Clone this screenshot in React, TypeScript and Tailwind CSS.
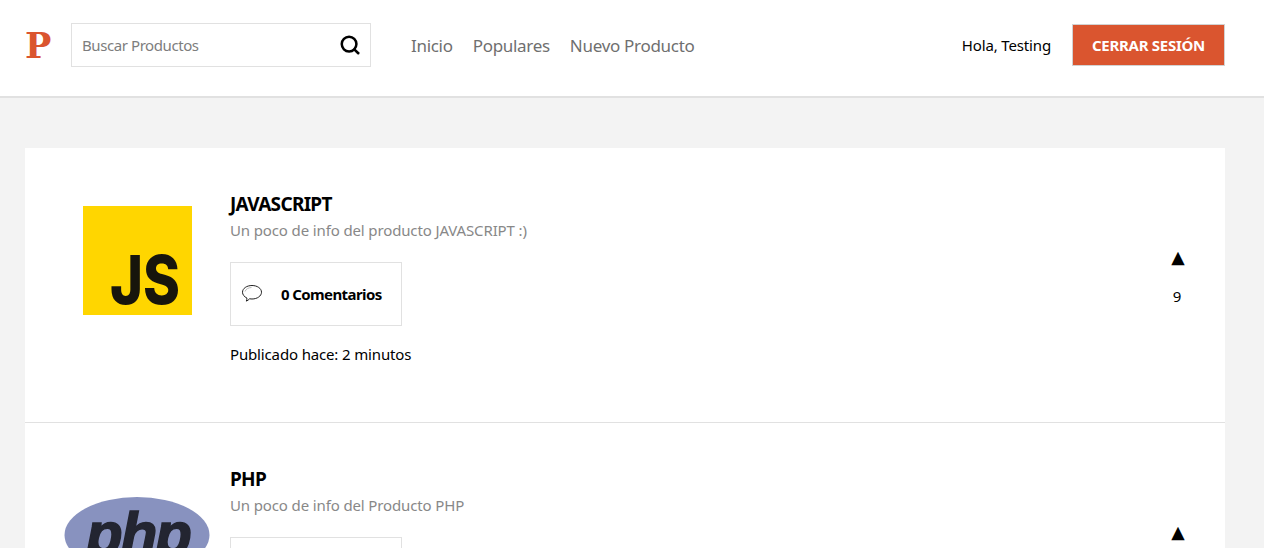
import { Search } from "lucide-react";

const FONT = "font-['Noto_Sans',sans-serif]";

function JsLogo() {
  return (
    <svg viewBox="0 0 150 150" className="w-[150px] h-[150px] shrink-0">
      <rect x="21" y="21" width="109" height="109" fill="#ffd600" />
      <text x="48" y="119" fontFamily="Inter, sans-serif" fontWeight="800" fontSize="67" textLength="70" lengthAdjust="spacingAndGlyphs" fill="#17150c">
        JS
      </text>
    </svg>
  );
}

function PhpLogo() {
  return (
    <svg viewBox="0 0 150 150" className="w-[150px] h-[150px] shrink-0">
      <ellipse cx="75" cy="75" rx="72.5" ry="38" fill="#8892bf" />
      <text x="24" y="94" fontFamily="Liberation Sans, sans-serif" fontStyle="italic" fontWeight="700" fontSize="60" letterSpacing="-2" stroke="#232531" strokeWidth="1.5" fill="#232531">
        php
      </text>
    </svg>
  );
}

function CommentIcon() {
  return (
    <svg viewBox="0 0 22 20" className="w-[22px] h-5 shrink-0" fill="none" stroke="#222" strokeWidth="1">
      <path d="M11 1.500c5.200 0 9.500 2.900 9.500 6.700s-4.300 6.800-9.500 6.800c-.8 0-1.600-.1-2.400-.2-.9 1-2 1.800-3.300 2.300.4-.9.600-1.900.6-3.100C3.300 12.800 1.500 10.700 1.500 8.200 1.500 4.400 5.800 1.500 11 1.500z" />
      <path d="M4 7.500C4.800 5 7.500 3.600 10.500 3.500" stroke="#bbb" />
    </svg>
  );
}

const PRODUCTS = [
  {
    name: "JAVASCRIPT",
    info: "Un poco de info del producto JAVASCRIPT :)",
    comments: 0,
    time: "2 minutos",
    votes: 9,
    logo: <JsLogo />,
  },
  {
    name: "PHP",
    info: "Un poco de info del Producto PHP",
    comments: 0,
    time: "3 minutos",
    votes: 5,
    logo: <PhpLogo />,
  },
];

export default function App() {
  return (
    <div className={`h-[548px] overflow-hidden bg-[#f3f3f3] ${FONT}`}>
      <header className="h-[98px] bg-white border-b-2 border-[#e1e1e1]">
        <div className="flex items-center justify-between w-[1200px] ml-[25px] h-[90px]">
          <div className="flex items-center">
            <span className="w-[46px] text-[35px] leading-none font-bold text-[#da552f] font-['DejaVu_Serif',serif]">P</span>
            <div className="flex items-center justify-between w-[300px] h-11 pl-[10px] pr-[9px] border border-[#e1e1e1]">
              <span className="text-[15px] tracking-[-0.42px] text-[#7d7d7d]">Buscar Productos</span>
              <Search className="w-[22px] h-[22px] text-black" strokeWidth={2.75} />
            </div>
            <nav className="flex items-center gap-5 ml-10 pt-[1px] text-[17px] tracking-[-0.3px] text-[#6f6f6f]">
              <a>Inicio</a>
              <a>Populares</a>
              <a>Nuevo Producto</a>
            </nav>
          </div>
          <div className="flex items-center gap-[21px]">
            <span className="text-[15px] tracking-[-0.15px] text-black">Hola, Testing</span>
            <button className="w-[153px] h-[42px] bg-[#da552f] border border-[#d2d2d2] text-white text-[15px] font-bold tracking-[-0.28px]">
              CERRAR SESIÓN
            </button>
          </div>
        </div>
      </header>

      <main className="w-[1200px] ml-[25px] mt-[50px] bg-white">
        {PRODUCTS.map((p) => (
          <article key={p.name} className="flex items-start h-[275px] pl-[37px] pt-[37px] border-b border-[#e1e1e1]">
            {p.logo}
            <div className="ml-[18px] flex-1 mt-[2px]">
              <h2 className="text-[19px] leading-[34px] font-bold tracking-[-0.7px] text-black">{p.name}</h2>
              <p className="-mt-[2px] text-[15px] leading-[22px] tracking-[-0.13px] text-[#888888]">{p.info}</p>
              <div className="flex items-center w-[172px] h-16 mt-[21px] pl-[10px] border border-[#e1e1e1]">
                <CommentIcon />
                <span className="ml-[18px] text-[15px] font-bold tracking-[-0.6px] text-black">{p.comments} Comentarios</span>
              </div>
              <p className="mt-[16px] text-[15px] leading-6 tracking-[-0.15px] text-black">Publicado hace: {p.time}</p>
            </div>
            <div className="flex flex-col items-center w-[16px] mt-[57px] mr-[40px] text-black">
              <span className="ml-[2px] text-[17.5px] leading-[30px] font-['DejaVu_Sans',sans-serif]">▲</span>
              <span className="mt-[14px] text-[15px] leading-5">{p.votes}</span>
            </div>
          </article>
        ))}
      </main>
    </div>
  );
}
